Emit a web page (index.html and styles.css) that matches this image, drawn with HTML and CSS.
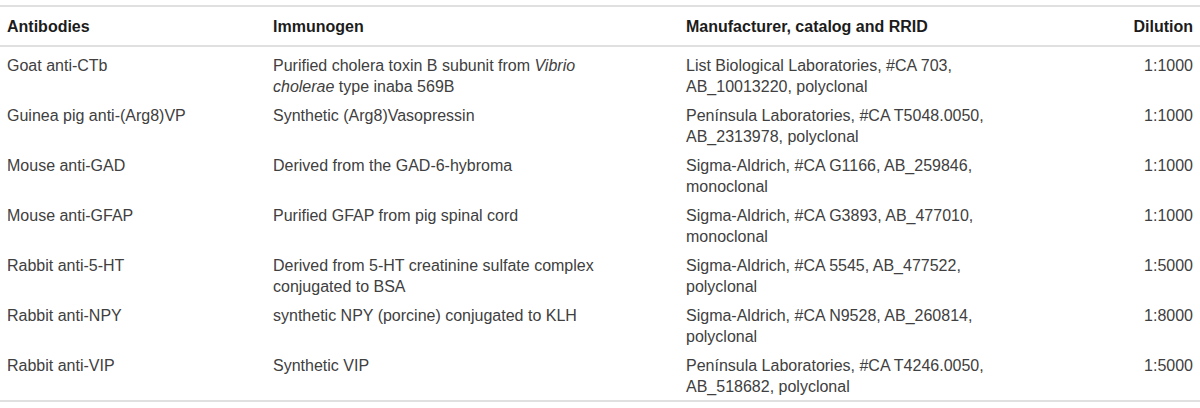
FILE: index.html
```html
<!DOCTYPE html>
<html lang="en">
<head>
<meta charset="utf-8">
<title>Antibodies</title>
<link rel="stylesheet" href="styles.css">
</head>
<body>
<table class="ab-table">
  <colgroup>
    <col class="w1"><col class="w2"><col class="w3"><col class="w4">
  </colgroup>
  <thead>
    <tr>
      <th class="c1">Antibodies</th>
      <th class="c2">Immunogen</th>
      <th class="c3">Manufacturer, catalog and RRID</th>
      <th class="c4">Dilution</th>
    </tr>
  </thead>
  <tbody>
    <tr>
      <td class="c1">Goat anti-CTb</td>
      <td class="c2">Purified cholera toxin B subunit from <i class="sp">Vibrio</i> <i class="sp">cholerae</i> type inaba 569B</td>
      <td class="c3">List Biological Laboratories, #CA 703, AB_10013220, polyclonal</td>
      <td class="c4">1:1000</td>
    </tr>
    <tr>
      <td class="c1">Guinea pig anti-(Arg8)VP</td>
      <td class="c2">Synthetic (Arg8)Vasopressin</td>
      <td class="c3">Península Laboratories, #CA T5048.0050, AB_2313978, polyclonal</td>
      <td class="c4">1:1000</td>
    </tr>
    <tr>
      <td class="c1">Mouse anti-GAD</td>
      <td class="c2">Derived from the GAD-6-hybroma</td>
      <td class="c3">Sigma-Aldrich, #CA G1166, AB_259846, monoclonal</td>
      <td class="c4">1:1000</td>
    </tr>
    <tr>
      <td class="c1">Mouse anti-GFAP</td>
      <td class="c2">Purified GFAP from pig spinal cord</td>
      <td class="c3">Sigma-Aldrich, #CA G3893, AB_477010, monoclonal</td>
      <td class="c4">1:1000</td>
    </tr>
    <tr>
      <td class="c1">Rabbit anti-5-HT</td>
      <td class="c2">Derived from 5-HT creatinine sulfate complex conjugated to BSA</td>
      <td class="c3">Sigma-Aldrich, #CA 5545, AB_477522, polyclonal</td>
      <td class="c4">1:5000</td>
    </tr>
    <tr>
      <td class="c1">Rabbit anti-NPY</td>
      <td class="c2">synthetic NPY (porcine) conjugated to KLH</td>
      <td class="c3">Sigma-Aldrich, #CA N9528, AB_260814, polyclonal</td>
      <td class="c4">1:8000</td>
    </tr>
    <tr class="last">
      <td class="c1">Rabbit anti-VIP</td>
      <td class="c2">Synthetic VIP</td>
      <td class="c3">Península Laboratories, #CA T4246.0050, AB_518682, polyclonal</td>
      <td class="c4">1:5000</td>
    </tr>
  </tbody>
</table>
</body>
</html>
```
FILE: styles.css
```css
html, body {
  margin: 0;
  padding: 0;
  background: #ffffff;
}

body {
  font-family: "Liberation Sans", Arial, sans-serif;
  font-size: 16px;
  color: #404040;
}

.ab-table {
  width: 1200px;
  margin-top: 5px;
  border-collapse: collapse;
  table-layout: fixed;
  border-top: 2px solid #e0e0e0;
  border-bottom: 2px solid #e0e0e0;
}

.w1 { width: 266px; }
.w2 { width: 413px; }
.w3 { width: 421px; }
.w4 { width: 100px; }

.ab-table th {
  font-weight: bold;
  color: #1c1c1c;
  text-align: left;
  line-height: 21px;
  padding-top: 9px;
  padding-bottom: 8px;
  border-bottom: 2px solid #e0e0e0;
  vertical-align: middle;
}

.ab-table td {
  line-height: 21px;
  padding-top: 8px;
  padding-bottom: 0;
  vertical-align: top;
}

.ab-table tr.last td {
  padding-bottom: 3px;
}

.sp {
  font-style: italic;
}

.c1 { padding-left: 7px; padding-right: 7px; }
.c2 { padding-left: 7px; padding-right: 66px; }
.c3 { padding-left: 7px; padding-right: 84px; }
.ab-table .c4 { padding-left: 7px; padding-right: 7px; text-align: right; }
```
